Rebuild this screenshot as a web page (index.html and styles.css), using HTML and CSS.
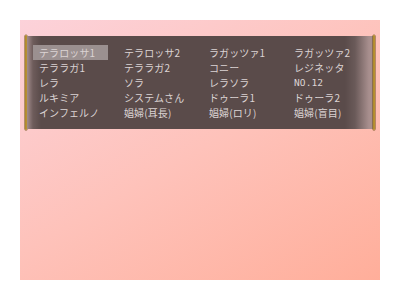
FILE: index.html
```html
<!DOCTYPE html>
<html lang="ja">
<head>
<meta charset="utf-8">
<link rel="stylesheet" href="styles.css">
</head>
<body>
<div class="stage">
  <div class="window">
    <div class="bar"></div>
    <div class="content">
      <ul class="list">
        <li class="item selected">テラロッサ1</li>
        <li class="item">テラロッサ2</li>
        <li class="item">ラガッツァ1</li>
        <li class="item">ラガッツァ2</li>
        <li class="item">テララガ1</li>
        <li class="item">テララガ2</li>
        <li class="item">コニー</li>
        <li class="item">レジネッタ</li>
        <li class="item">レラ</li>
        <li class="item">ソラ</li>
        <li class="item">レラソラ</li>
        <li class="item mono">NO.12</li>
        <li class="item">ルキミア</li>
        <li class="item">システムさん</li>
        <li class="item">ドゥーラ1</li>
        <li class="item">ドゥーラ2</li>
        <li class="item">インフェルノ</li>
        <li class="item">娼婦(耳長)</li>
        <li class="item">娼婦(ロリ)</li>
        <li class="item">娼婦(盲目)</li>
      </ul>
    </div>
    <div class="bar"></div>
  </div>
</div>
</body>
</html>
```
FILE: styles.css
```css
html, body {
  margin: 0;
  padding: 0;
  background: #ffffff;
}
body {
  width: 400px;
  height: 300px;
  padding: 20px;
  box-sizing: border-box;
  font-family: "Noto Sans CJK JP", "Noto Sans", sans-serif;
}
.stage {
  width: 360px;
  height: 260px;
  padding: 15px 0 0 5px;
  box-sizing: border-box;
  background: linear-gradient(150deg, #fcd2da 0%, #fec2ba 50%, #ffae9a 100%);
}
.window {
  display: flex;
  width: 350px;
  height: 95px;
}
.bar {
  width: 4px;
  box-sizing: border-box;
  background: linear-gradient(90deg, #8a6a1c, #d4aa40 50%, #9a7622);
  border-radius: 2px;
  box-shadow: 0 0 0 0.5px #6a4e14;
}
.content {
  flex: 1;
  margin: 1px 0;
  padding: 9px 0 0 6px;
  background: linear-gradient(90deg, #a28c8c 0px, #6e5c5b 6px, #5a4b4a 14px, #5a4b4a 318px, #6a5a59 328px, #a88f8e 342px);
}
.list {
  list-style: none;
  margin: 0;
  padding: 0;
  display: grid;
  grid-template-columns: repeat(4, 85px);
  grid-auto-rows: 15px;
}
.item {
  width: 75px;
  height: 15px;
  padding-left: 6px;
  box-sizing: border-box;
  font-size: 10px;
  line-height: 15px;
  color: #dcd4d4;
  white-space: nowrap;
  letter-spacing: 0.1px;
}
.selected {
  background: #9b9090;
}
.mono {
  font-family: "DejaVu Sans Mono", monospace;
  font-size: 9.5px;
}
```
